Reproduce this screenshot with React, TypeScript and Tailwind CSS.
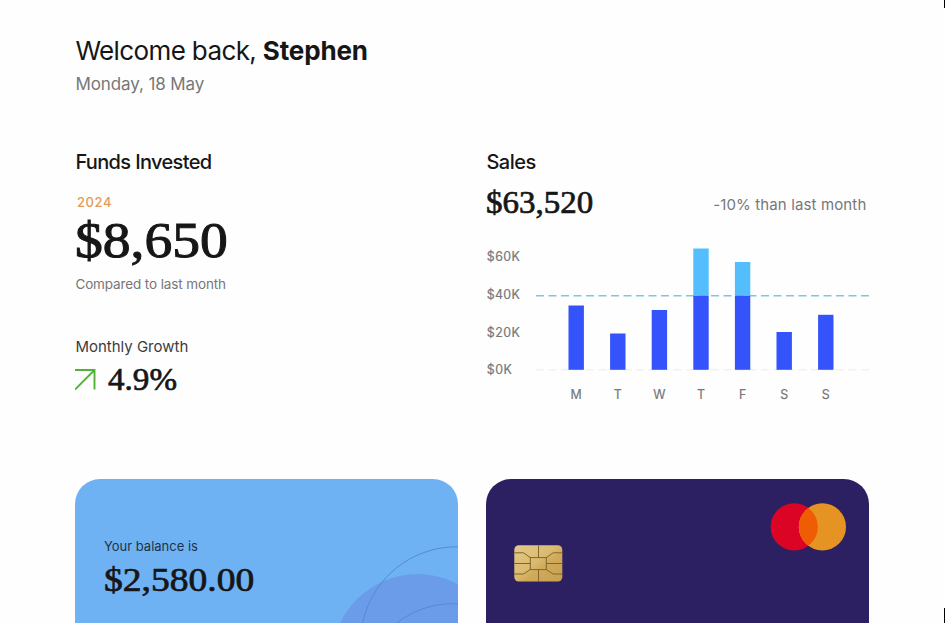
import React from "react";

const sans = "font-['Inter','Liberation_Sans',sans-serif]";
const serif =
  "block w-max origin-left whitespace-nowrap font-['Liberation_Serif',serif] text-[#161616]";

const bars = [
  { day: "M", x: 82.5, top: 65.5 },
  { day: "T", x: 124.1, top: 93.5 },
  { day: "W", x: 165.7, top: 70 },
  { day: "T", x: 207.3, top: 8.5 },
  { day: "F", x: 248.9, top: 22 },
  { day: "S", x: 290.5, top: 92 },
  { day: "S", x: 332.1, top: 74.8 },
];

const ticks = [
  { label: "$60K", y: 21, w: 33 },
  { label: "$40K", y: 58.7, w: 33 },
  { label: "$20K", y: 96.5, w: 33 },
  { label: "$0K", y: 134, w: 25 },
];

function SalesChart() {
  return (
    <svg width="384" height="164" viewBox="0 0 384 164" className={`block ${sans}`}>
      {ticks.map((t) => (
        <text key={t.label} x="0.8" y={t.y} fontSize="12.4" fill="#777" stroke="#777" strokeWidth="0.2" textLength={t.w}>
          {t.label}
        </text>
      ))}
      <line x1="50" x2="384" y1="55.8" y2="55.8" stroke="#79cad8" strokeWidth="1.5" strokeDasharray="8 4.5" />
      <line x1="50" x2="384" y1="129.8" y2="129.8" stroke="#ececec" strokeDasharray="8 4.5" />
      {bars.map((b, i) => {
        const split = Math.max(b.top, 55.8);
        return (
          <g key={i}>
            {b.top < 55.8 && <rect x={b.x} y={b.top} width="15.4" height={split - b.top} fill="#54bdfc" />}
            <rect x={b.x} y={split} width="15.4" height={129.8 - split} fill="#3453fb" />
            <text x={b.x + 7.7} y="158.8" fontSize="12.4" fill="#777" stroke="#777" strokeWidth="0.2" textAnchor="middle">
              {b.day}
            </text>
          </g>
        );
      })}
    </svg>
  );
}

function Chip() {
  return (
    <svg width="49" height="37" viewBox="0 0 49 37" className="block">
      <defs>
        <linearGradient id="gold" x1="0" y1="0" x2="1" y2="1">
          <stop offset="0" stopColor="#e3c989" />
          <stop offset="0.45" stopColor="#dabb70" />
          <stop offset="0.6" stopColor="#d0aa59" />
          <stop offset="1" stopColor="#c79f52" />
        </linearGradient>
      </defs>
      <rect x="0.3" y="0.3" width="48" height="36.3" rx="4.5" fill="url(#gold)" />
      <g fill="none" stroke="#80652d" strokeWidth="1">
        <rect x="16.3" y="12.6" width="16" height="12" />
        <path d="M24.5 0.5V12.6M24.5 24.6V36.5M0.3 18.5H16.3M32.3 18.5H48.3" />
        <path d="M0.3 7.8H9.5L16.3 12.6M48.3 7.8H39.2L32.3 12.6M0.3 29H9.5L16.3 24.6M48.3 29H39.2L32.3 24.6" />
      </g>
    </svg>
  );
}

function CardBrand() {
  return (
    <svg width="76" height="48" viewBox="0 0 76 48" className="block">
      <clipPath id="left-disc">
        <circle cx="24.2" cy="23.9" r="23.6" />
      </clipPath>
      <circle cx="24.2" cy="23.9" r="23.6" fill="#dc0424" />
      <circle cx="52.4" cy="23.9" r="23.6" fill="#e59424" />
      <circle cx="52.4" cy="23.9" r="23.6" fill="#ee5c04" clipPath="url(#left-disc)" />
    </svg>
  );
}

export default function App() {
  return (
    <div className={`relative h-[623px] w-[945px] overflow-hidden bg-[#fefefe] pl-[75.4px] text-[#161616] ${sans}`}>
      <header className="pt-[34.5px]">
        <h1 className="text-[26px] leading-8 tracking-[-0.62px] whitespace-nowrap">
          Welcome back, <span className="font-bold tracking-[-0.15px]">Stephen</span>
        </h1>
        <p className="mt-[5px] text-[17px] leading-6 tracking-[-0.1px] text-[#777]">Monday, 18 May</p>
      </header>

      <div className="mt-[54px] flex h-[329.5px] gap-7">
        <section className="w-[383px]">
          <h2 className="text-[20px] leading-6 font-medium tracking-[-0.65px]">Funds Invested</h2>
          <p className="mt-5 pl-[1.5px] text-[13px] leading-4 font-medium tracking-[0.6px] text-[#e59a55]">2024</p>
          <p className={`${serif} mt-1 h-[52px] scale-x-[1.09] text-[51px] leading-[52px] [-webkit-text-stroke:1px_#161616]`}>
            $8,650
          </p>
          <p className="mt-2 text-[13.5px] leading-5 tracking-[-0.12px] text-[#777]">Compared to last month</p>
          <p className="mt-[43.5px] text-[15px] leading-5 text-[#3c3c3c]">Monthly Growth</p>
          <div className="mt-1.5 flex h-8 items-center">
            <svg width="22" height="22" viewBox="0 0 22 22" className="mr-[11px] block" fill="none" stroke="#51b238" strokeWidth="1.9">
              <path d="M0 2H19.5V21.5M19.5 2L0 21.5" />
            </svg>
            <span className={`${serif} scale-x-[1.035] text-[32px] leading-8 [-webkit-text-stroke:0.7px_#161616]`}>4.9%</span>
          </div>
        </section>

        <section className="w-[384px]">
          <h2 className="text-[20px] leading-6 font-medium tracking-[-0.5px]">Sales</h2>
          <div className="mt-3 flex h-9 items-center justify-between pr-1">
            <p className={`${serif} -mt-1 scale-x-[1.03] text-[32px] leading-9 [-webkit-text-stroke:0.7px_#161616]`}>$63,520</p>
            <p className="mt-0.5 text-[15px] leading-5 tracking-[0.13px] text-[#777]">-10% than last month</p>
          </div>
          <div className="mt-[18.5px]">
            <SalesChart />
          </div>
        </section>
      </div>

      <div className="flex gap-7">
        <section className="relative h-[240px] w-[383px] overflow-hidden rounded-[25px] bg-[#6fb2f3] pt-[57px] pl-[28.5px]">
          <svg width="383" height="240" viewBox="0 0 383 240" className="absolute inset-0">
            <circle cx="342.5" cy="180.5" r="85.5" fill="#6a9ce9" />
            <circle cx="381.5" cy="163.8" r="96" fill="none" stroke="#5a88d3" />
            <circle cx="377.5" cy="214.7" r="90" fill="none" stroke="#5a88d3" />
          </svg>
          <p className="relative text-[13px] leading-5 text-[#1d3247]">Your balance is</p>
          <p className={`${serif} relative mt-1.5 scale-x-[1.105] text-[34px] leading-9 [-webkit-text-stroke:0.7px_#161616]`}>
            $2,580.00
          </p>
        </section>

        <section className="flex h-[240px] w-[383px] items-start justify-between rounded-[25px] bg-[#2d2062] pt-[23.5px] pr-[23px] pl-7">
          <div className="pt-[42px]">
            <Chip />
          </div>
          <CardBrand />
        </section>
      </div>

      <div className="absolute top-0 right-0 h-2 w-px bg-black" />
      <div className="absolute right-0 bottom-0 h-[15px] w-px bg-black" />
    </div>
  );
}
